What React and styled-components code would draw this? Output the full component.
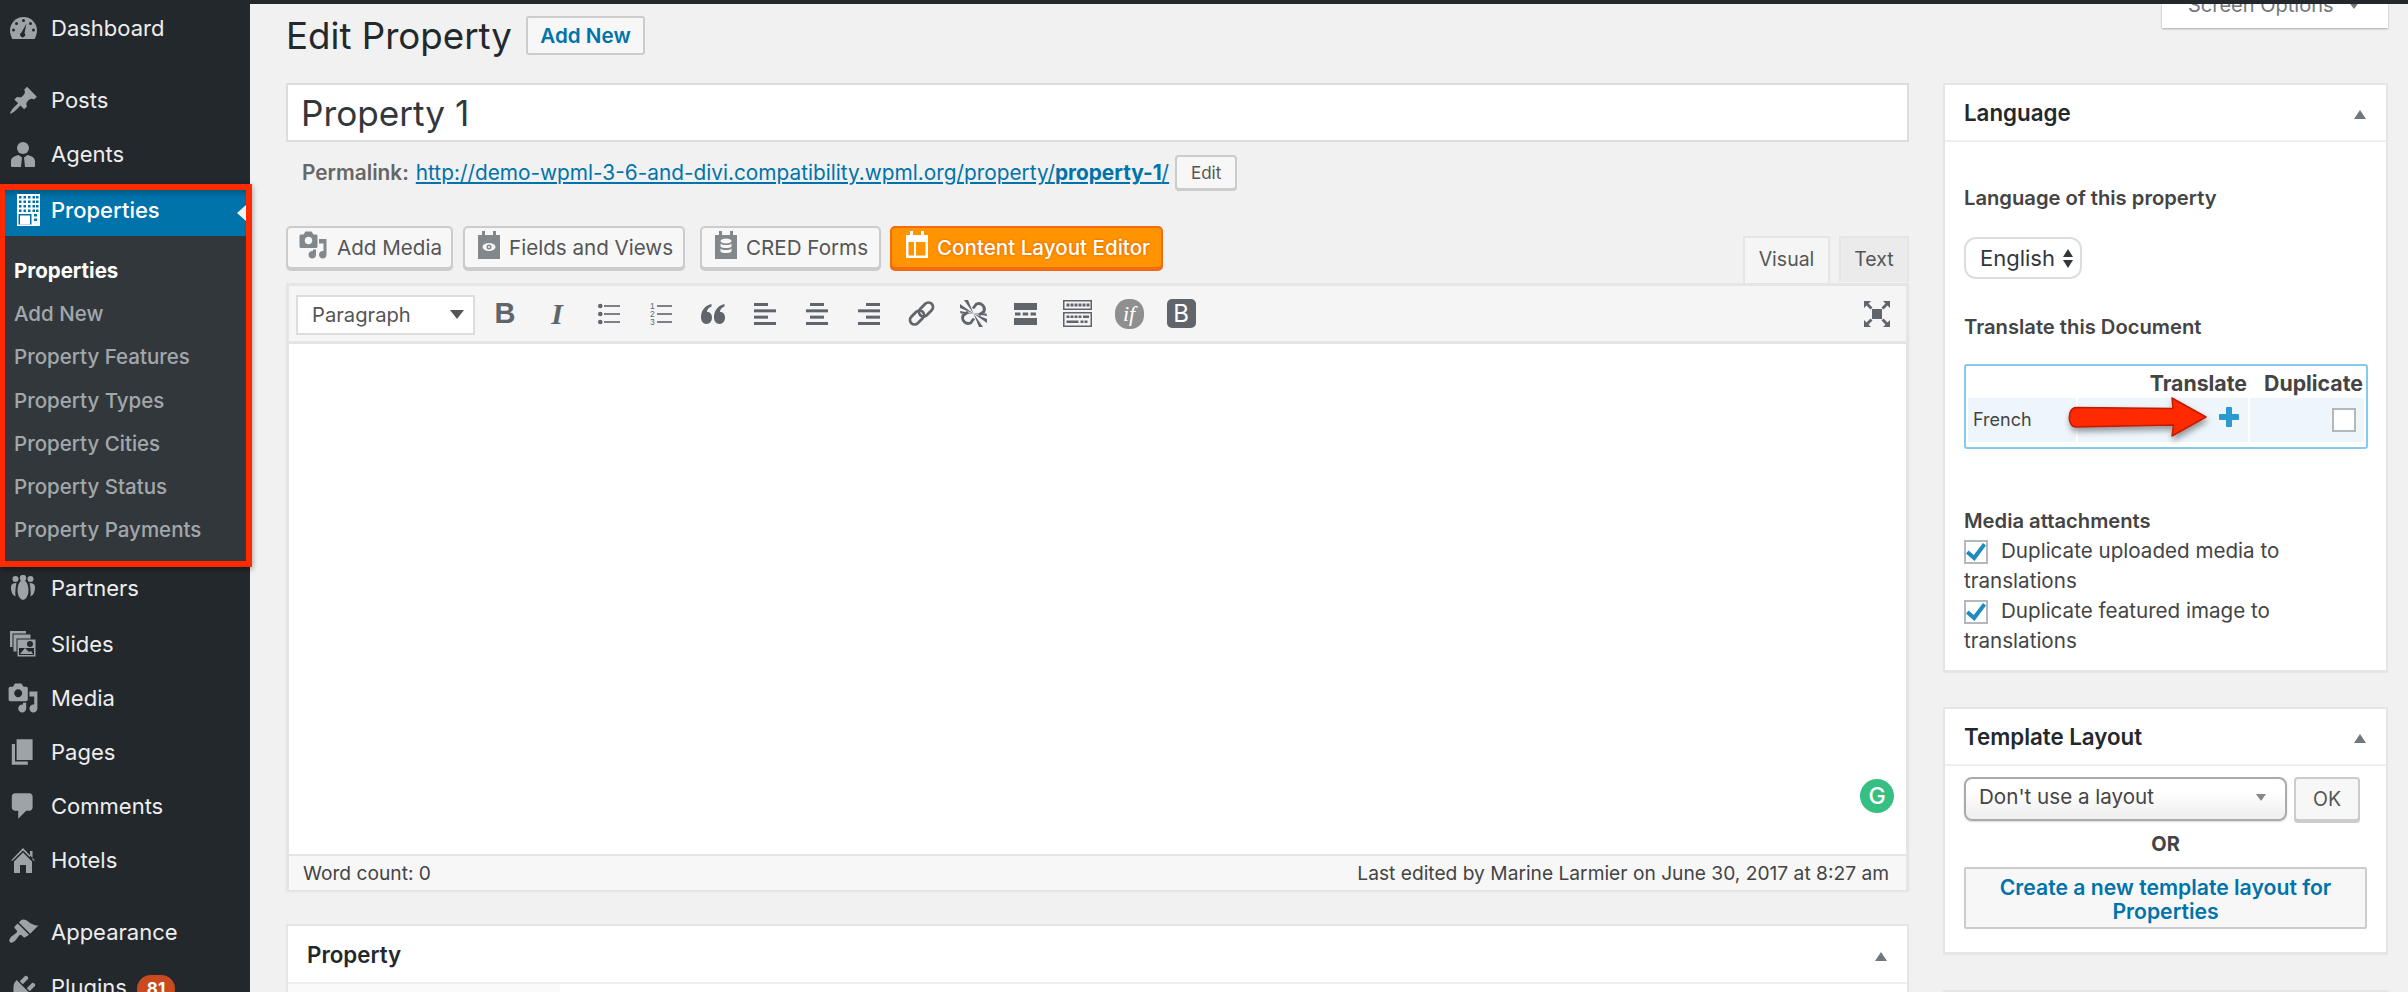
import React from "react";
import styled, { createGlobalStyle } from "styled-components";

const Global = createGlobalStyle`
  html, body { margin: 0; padding: 0; height: 992px; overflow: hidden; background: #f1f1f1; }
  body { font-family: Inter, "Noto Sans", "Liberation Sans", sans-serif; color: #444; }
  * { box-sizing: border-box; }
  #root { height: 992px; overflow: hidden; }
`;

const TopBar = styled.div`height: 4px; background: #23282d;`;
const Layout = styled.div`display: flex; height: 988px;`;

const Sidebar = styled.nav`
  width: 250px; flex: none; background: #23282d; position: relative;
`;
const MenuItem = styled.div`
  display: flex; align-items: center; height: ${p => p.$h || 54}px;
  margin-top: ${p => p.$mt || 0}px; color: #eee; font-size: 22px;
`;
const MenuIcon = styled.span`
  width: 51px; flex: none; display: flex; justify-content: center; padding-right: 5px; color: #9ea3a8;
  svg { display: block; fill: currentColor; }
`;
const Highlight = styled.div`
  position: relative; z-index: 2; width: 252px; margin-top: 3px;
  border: 6px solid #ff2a00; border-left-width: 5px;
  box-shadow: 0 2px 6px rgba(0,0,0,.4);
  background: #32373c;
`;
const ActiveItem = styled.div`
  display: flex; align-items: center; height: 46px; padding-bottom: 6px; padding-left: 0;
  background: #0073aa; color: #fff; font-size: 22px; font-weight: 500;
  box-shadow: inset 0 6px 5px -3px rgba(0,0,0,.25);
  ${MenuIcon} { width: 46px; color: #fff; padding-right: 0; }
`;
const ActiveCaret = styled.span`
  margin-left: auto; width: 0; height: 0; margin-top: 6px;
  border-top: 8px solid transparent; border-bottom: 8px solid transparent; border-right: 9px solid #f1f1f1;
`;
const SubMenu = styled.div`padding: 13px 0 10px 9px;`;
const SubItem = styled.div`
  height: 43.2px; line-height: 43.2px; font-size: 20.5px;
  color: ${p => p.$on ? "#fff" : "rgba(240,245,250,.6)"}; font-weight: ${p => p.$on ? 700 : 500};
`;
const Badge = styled.span`
  display: inline-block; margin-left: 10px; height: 28px; line-height: 28px; padding: 0 10px; border-radius: 14px;
  background: #ca4a1f; color: #fff; font-size: 17px; font-weight: 700;
`;
const MenuLabel = styled.span`white-space: nowrap;`;

const Content = styled.main`
  flex: 1; display: flex; gap: 34px; padding: 0 20px 0 36px; min-width: 0;
`;
const LeftCol = styled.div`width: 1623px; flex: none; padding-top: 12px;`;
const RightCol = styled.div`width: 445px; flex: none; display: flex; flex-direction: column;`;

const HeaderRow = styled.div`display: flex; align-items: center; gap: 16px; height: 39px;`;
const PageTitle = styled.h1`
  margin: 0; width: 224px; white-space: nowrap; font-size: 36.7px; font-weight: 400; color: #23282d; line-height: 39px;
`;
const AddNew = styled.span`
  display: flex; align-items: center; justify-content: center; width: 119px; height: 39px; border: 2px solid #ccc; border-radius: 3px;
  background: #f7f7f7; color: #0073aa; font-size: 20.6px; font-weight: 600;
`;
const TitleField = styled.div`
  margin-top: 28px; height: 59px; padding-left: 13px; display: flex; align-items: center;
  background: #fff; border: 2px solid #ddd; font-size: 35.2px; color: #32373c;
`;
const PermaRow = styled.div`
  margin-top: 13px; padding-left: 16px; height: 35px; display: flex; align-items: center; font-size: 20.8px; color: #666; white-space: nowrap;
`;
const PermaLabel = styled.strong`font-weight: 600; margin-right: 7px;`;
const PermaLink = styled.a`color: #0073aa; text-decoration: underline;`;
const SmallBtn = styled.span`
  margin-left: 6px; height: 35px; width: 62px; display: flex; align-items: center; justify-content: center;
  border: 2px solid #ccc; border-radius: 4px; background: #f7f7f7; color: #555; font-size: 17px; box-shadow: 0 1px 0 #ccc;
`;
const MediaRow = styled.div`margin-top: 36px; height: 57px; display: flex; align-items: flex-start;`;
const ToolBtn = styled.span`
  height: 43px; width: ${p => p.$w}px; margin-right: ${p => p.$mr}px; display: flex; align-items: center; gap: ${p => p.$gap || 9}px;
  padding-left: ${p => p.$pl || 12}px; border: 2px solid #ccc; border-radius: 5px; background: #f7f7f7; color: #555;
  font-size: 20.6px; box-shadow: 0 2px 0 #ccc; white-space: nowrap;
  svg { flex: none; fill: #82878c; margin-top: -6px; }
`;
const OrangeBtn = styled(ToolBtn)`
  background: #ff9400; border-color: #f56b0f; color: #fff; font-weight: 500; box-shadow: 0 2px 0 #ef6a10;
  text-shadow: 0 0 3px #d85a00; svg { fill: #fff; }
`;
const Tabs = styled.div`margin-left: auto; align-self: flex-end; display: flex; gap: 9px; margin-right: 0;`;
const Tab = styled.span`
  height: ${p => p.$on ? 47 : 46}px; width: ${p => p.$w}px; display: flex; align-items: center; justify-content: center; padding-bottom: 3px;
  border: 2px solid #e5e5e5; border-bottom: 0; background: ${p => p.$on ? "#f5f5f5" : "#ebebeb"}; color: #555; font-size: 19.5px;
`;
const Editor = styled.section`
  border: 3px solid #e5e5e5; border-bottom: 0; box-shadow: 0 2px 2px rgba(0,0,0,.06); background: #fff;
`;
const Toolbar = styled.div`
  height: 58px; background: #f5f5f5; border-bottom: 3px solid #e5e5e5; display: flex; align-items: center; padding: 0 0 0 7px;
`;
const FormatSelect = styled.span`
  width: 179px; height: 40px; margin-right: 4px; margin-top: 2px; flex: none; display: flex; align-items: center; justify-content: space-between;
  padding: 0 9px 0 14px; background: #fff; border: 2px solid #ddd; color: #555; font-size: 20.2px;
`;
const Caret = styled.i`
  width: 0; height: 0; border-left: ${p => p.$s || 7}px solid transparent; border-right: ${p => p.$s || 7}px solid transparent;
  border-top: ${p => (p.$s || 7) * 1.4}px solid ${p => p.$c || "#555"}; display: block;
`;
const TI = styled.span`
  width: 52px; height: 32px; flex: none; display: flex; align-items: center; justify-content: center; color: #60656c;
  ${p => p.$end && "margin-left: auto; margin-right: 3px;"}
  svg { display: block; }
`;
const BoldGlyph = styled.b`font: 700 29px "Liberation Sans", sans-serif; color: #60656c;`;
const ItalicGlyph = styled.i`font: italic 700 30px "Liberation Serif", serif; color: #60656c;`;
const IfBadge = styled.span`
  width: 29px; height: 30px; border-radius: 46%; background: #8f8f8f; color: #fff; display: flex; align-items: center; justify-content: center;
  font: italic 22px "Liberation Serif", serif;
`;
const BsBadge = styled.span`
  width: 29px; height: 29px; border-radius: 5px; background: #60656c; color: #fff; display: flex; align-items: center; justify-content: center;
  font: 400 24px Inter, sans-serif;
`;
const EditorBody = styled.div`
  height: 510px; background: #fff; display: flex; align-items: flex-end; justify-content: flex-end; padding: 0 12px 41px 0;
`;
const Grammarly = styled.span`
  width: 34px; height: 34px; border-radius: 50%; background: #35bf82; color: #fff; display: flex; align-items: center; justify-content: center;
  font: 500 23px Inter, sans-serif;
`;
const StatusBar = styled.div`
  height: 36px; border-top: 2px solid #e5e5e5; background: #f7f7f7; display: flex; align-items: center; justify-content: space-between;
  padding: 0 17px 0 14px; font-size: 19.2px; color: #444;
`;
const PostBox = styled.section`
  background: #fff; border: 2px solid #e5e5e5; box-shadow: 0 1px 1px rgba(0,0,0,.04); margin-top: ${p => p.$mt || 0}px; flex: none;
`;
const BoxHead = styled.div`
  height: ${p => p.$h || 57}px; display: flex; align-items: center; justify-content: space-between; padding: 0 20px 0 19px;
  border-bottom: 2px solid #eee; font-size: 22.3px; font-weight: 600; color: #23282d;
`;
const UpArrow = styled.i`
  width: 0; height: 0; border-left: 6px solid transparent; border-right: 6px solid transparent; border-bottom: 9px solid #72777c; display: block; margin-top: 4px;
`;
const PropertyRest = styled.div`height: 40px; display: flex;`;
const PropertySide = styled.div`width: 272px; background: #fafafa;`;

const ScreenTab = styled.div`
  align-self: flex-end; width: 226px; height: 24px; overflow: hidden; flex: none; background: #fff; display: flex; align-items: flex-end; justify-content: space-between;
  padding: 0 26px 11px 26px; box-shadow: 0 1px 2px rgba(0,0,0,.3); color: #72777c; font-size: 20px; line-height: 24px; white-space: nowrap;
`;
const ScreenTabText = styled.span`display: flex; align-items: center; gap: 14px;`;
const SideBody = styled.div`padding: ${p => p.$pad || "41px 19px 14px 19px"}; font-size: 20.6px; line-height: 30px; color: #444;`;
const Label = styled.div`font-weight: 600; font-size: 20.2px; margin-top: ${p => p.$mt || 0}px; color: #444;`;
const LangSelect = styled.span`
  margin-top: 24px; width: 118px; height: 42px; display: flex; align-items: center; gap: 8px; padding-left: 14px;
  border: 2px solid #ddd; border-radius: 12px; background: #fff; color: #32373c; font-size: 22px;
`;
const Updown = styled.span`display: flex; flex-direction: column; gap: 3px;`;
const Up = styled.i`width: 0; height: 0; border-left: 5px solid transparent; border-right: 5px solid transparent; border-bottom: 8px solid #32373c; display:block;`;
const Down = styled.i`width: 0; height: 0; border-left: 5px solid transparent; border-right: 5px solid transparent; border-top: 8px solid #32373c; display:block;`;
const TransTable = styled.div`
  position: relative; margin-top: 22px; width: 404px; height: 85px; border: 2px solid #85c9ec; border-radius: 3px; padding: 0 2px;
`;
const TransHead = styled.div`
  height: 32px; display: grid; grid-template-columns: 108px 170px 114px; column-gap: 2px; font-weight: 700; color: #444; line-height: 34px; font-size: 21.3px;
`;
const HeadCell = styled.span`text-align: right; white-space: nowrap; padding-right: 1px;`;
const TransRow = styled.div`height: 44px; display: grid; grid-template-columns: 108px 170px 114px; column-gap: 2px;`;
const TransCell = styled.div`
  background: #eef6fc; display: flex; align-items: center; font-size: 18px; color: #444; position: relative;
  padding-left: ${p => p.$pl || 0}px; justify-content: ${p => p.$j || "flex-start"}; padding-right: ${p => p.$pr || 0}px;
`;
const Arrow = styled.svg`position: absolute; left: 102px; top: 31px; overflow: visible;`;
const PlusCell = styled.span`margin-top: -7px; display: block; svg { display: block; }`;
const CheckBox = styled.span`
  width: 24px; height: 24px; flex: none; display: inline-flex; align-items: center; justify-content: center; background: #fff; border: 2px solid #b4b9be;
  svg { display: block; }
`;
const CheckLine = styled.div`white-space: normal;`;
const CheckText = styled.span`margin-left: 13px;`;
const InlineCheck = styled(CheckBox)`vertical-align: -3px;`;
const TemplateRow = styled.div`display: flex; gap: 7px; height: 44px;`;
const TemplateSelect = styled.span`
  width: 323px; height: 44px; display: flex; align-items: center; justify-content: space-between; padding: 0 19px 4px 13px; white-space: nowrap;
  border: 2px solid #aaa; border-radius: 8px; background: linear-gradient(#fff 30%, #eee); box-shadow: 0 1px 2px rgba(0,0,0,.15); color: #444; font-size: 20.6px;
`;
const OkBtn = styled.span`
  width: 66px; display: flex; align-items: center; justify-content: center; border: 2px solid #ccc; border-radius: 4px; background: #f7f7f7; color: #555; box-shadow: 0 2px 0 #ccc; font-size: 19.5px;
`;
const OrLine = styled.div`height: 46px; line-height: 46px; text-align: center; font-weight: 700; color: #444; font-size: 20px;`;
const CreateBtn = styled.div`
  height: 62px; padding: 6px 0; border: 2px solid #ccc; border-radius: 2px; background: #f7f7f7; color: #0073aa; text-align: center; font-weight: 600; line-height: 24px; font-size: 21.2px;
`;

const P = ({ d, s = 26, vb = "0 0 20 20" }) => <svg width={s} height={s} viewBox={vb}><path d={d} /></svg>;

const Dash = () => (
  <svg width="27" height="22" viewBox="0 0 27 22">
    <path d="M13.5 0C6 0 0 6 0 13.5c0 3 1 5.8 2.4 8.5h22.2c1.4-2.7 2.4-5.500 2.400-8.500C27 6 21 0 13.500 0z" />
    <g fill="#23282d">
      <circle cx="13.500" cy="3.500" r="1.500" /><circle cx="6.500" cy="6.500" r="1.500" /><circle cx="20.500" cy="6.500" r="1.500" />
      <circle cx="3.500" cy="13" r="1.500" /><circle cx="23.500" cy="13" r="1.500" />
      <path d="M16.500 6.500l-2 9.500a2.500 2.500 0 1 1-3-.5z" />
    </g>
  </svg>
);
const Agent = () => (
  <svg width="24" height="25" viewBox="0 0 24 25">
    <circle cx="12" cy="6" r="6" />
    <path d="M1 25c-1 0-1-1-1-1v-5c0-3 3-5 7.500-6L11 15.500l-1 9.500zM23 25c1 0 1-1 1-1v-5c0-3-3-5-7.500-6L13 15.500l1 9.500z" />
  </svg>
);
const Building = () => (
  <svg width="23" height="32" viewBox="0 0 23 32" style={{ fill: "#fff" }}>
    <rect width="23" height="32" />
    <g fill="#0073aa">
      {[2, 6.500, 11, 15.500].map(y => [3, 7.500, 12, 16.500, 20].map(x => <rect key={`${x}${y}`} x={x - 1} y={y} width="2.500" height="2.500" />))}
      <rect x="1.500" y="20" width="13" height="10.500" />
      <rect x="17" y="20" width="3" height="2.500" /><rect x="17" y="24.500" width="3" height="2.500" />
    </g>
    <rect x="3" y="21.500" width="10" height="9" />
  </svg>
);
const Partners = () => (
  <svg width="24" height="25" viewBox="0 0 24 25">
    <circle cx="4.500" cy="4" r="3" /><circle cx="12" cy="3" r="3.200" /><circle cx="19.500" cy="4" r="3" />
    <ellipse cx="12" cy="15" rx="5.500" ry="10" />
    <path d="M5.500 8C2 8 0 9.500 0 12c0 4 1 8 4.500 9.500C4 18 4.500 12 5.500 8zM18.500 8c3.500 0 5.500 1.500 5.500 4 0 4-1 8-4.500 9.500C20 18 19.500 12 18.500 8z" />
  </svg>
);
const Slides = () => (
  <svg width="26" height="26" viewBox="0 0 26 26">
    <rect x="0" y="0" width="16" height="16" />
    <rect x="3" y="3" width="18" height="18" stroke="#23282d" strokeWidth="1" />
    <rect x="7" y="8" width="19" height="18" stroke="#23282d" strokeWidth="1" />
    <rect x="9" y="17" width="15" height="7" fill="#23282d" />
    <circle cx="20" cy="13" r="3" fill="#23282d" />
    <path d="M10 23l5-6 4 4 2-1 2 3z" />
  </svg>
);
const House = () => (
  <svg width="24" height="25" viewBox="0 0 24 25">
    <path d="M12 0L0 12.500h1.800L12 2.500l7 6.700V3h2.500v8.700l.800.800H24z" />
    <path fillRule="evenodd" d="M12 4.500l-9 9V25h18V13.500zM9 17h6v8H9z" />
  </svg>
);
const Icon = {
  post: "M10.440 3.020l1.820-1.820 6.360 6.350-1.830 1.820c-1.050-.68-2.480-.57-3.410.36l-.75.75c-.92.93-1.040 2.350-.35 3.410l-1.830 1.820-2.410-2.410-2.800 2.790c-.42.42-3.380 2.710-3.800 2.290s1.860-3.390 2.280-3.810l2.790-2.790L4.100 9.360l1.830-1.820c1.050.69 2.480.57 3.400-.36l.75-.75c.93-.92 1.050-2.350.36-3.410z",
  media: "M13 11V4c0-.55-.45-1-1-1h-1.670L9 1H5L3.670 3H2c-.55 0-1 .45-1 1v7c0 .55.45 1 1 1h10c.55 0 1-.45 1-1zM7 4.500c1.380 0 2.500 1.120 2.500 2.500S8.380 9.500 7 9.500 4.500 8.380 4.500 7 5.620 4.500 7 4.500zM14 6h5v10.500c0 1.380-1.120 2.500-2.500 2.500S14 17.880 14 16.500s1.120-2.500 2.500-2.500c.17 0 .34.020.5.050V9h-3V6zm-4 8.050V13h2v3.500c0 1.380-1.120 2.500-2.500 2.500S7 17.880 7 16.500 8.120 14 9.500 14c.17 0 .34.020.5.050z",
  page: "M6 15V2h10v13H6zm-1 1h8v2H3V5h2v11z",
  comment: "M5 2h9c1.100 0 2 .9 2 2v7c0 1.100-.9 2-2 2h-2l-5 5v-5H5c-1.100 0-2-.9-2-2V4c0-1.100.9-2 2-2z",
  brush: "M14.480 11.060L7.410 3.990l1.500-1.500c.5-.56 2.300-.47 3.510.32 1.210.8 1.430 1.280 2.910 2.100 1.180.64 2.450 1.260 4.450.85zm-.71.71L6.700 4.700 4.930 6.470c-.39.39-.39 1.020 0 1.410l1.060 1.060c.39.39.39 1.030 0 1.420-.6.6-1.430 1.150-2.210 1.690-.35.26-.7.53-1.010.84-1.340 1.340-1.660 2.790-1.010 3.430.65.65 2.100.33 3.430-1.010.31-.31.58-.66.84-1.010.54-.78 1.090-1.610 1.690-2.210.39-.39 1.030-.39 1.420 0l1.060 1.060c.39.39 1.020.39 1.410 0z",
  plug: "M13.110 4.360L9.870 7.600 8 5.730l3.240-3.240c.35-.34 1.050-.2 1.560.32.52.51.66 1.210.31 1.550zm-8 1.770l.91-1.120 9.010 9.010-1.190.84c-.71.71-2.630 1.160-3.820 1.160H6.140L4.900 17.260c-.59.59-1.540.59-2.120 0-.59-.58-.59-1.530 0-2.120l1.240-1.240v-3.880c0-1.130.4-3.190 1.090-3.890zm7.260 3.970l3.240-3.240c.34-.35 1.040-.21 1.550.31.52.51.66 1.210.31 1.550l-3.240 3.250z",
};

const Menu = ({ icon, h, mt, children }) => (
  <MenuItem $h={h} $mt={mt}><MenuIcon>{icon}</MenuIcon><MenuLabel>{children}</MenuLabel></MenuItem>
);

const PlugBox = ({ eye }) => (
  <svg width="22" height="28" viewBox="0 0 22 28">
    <path fillRule="evenodd" d="M4 0h3v4h8V0h3v4h4v24H0V4h4z" />
    {eye ? (
      <g fill="#f7f7f7"><ellipse cx="11" cy="16" rx="6.500" ry="4" /><circle cx="11" cy="16" r="2.500" fill="#82878c" /><circle cx="11" cy="16" r="1" /></g>
    ) : (
      <g fill="#f7f7f7"><ellipse cx="11" cy="10" rx="5.500" ry="2.500" /><path d="M5.500 12.500c1.500 2 9.500 2 11 0v3c-1.500 2-9.500 2-11 0zM5.500 17.500c1.500 2 9.500 2 11 0v3c-1.500 2-9.500 2-11 0z" /></g>
    )}
  </svg>
);
const Calendar = () => (
  <svg width="22" height="27" viewBox="0 0 22 27">
    <path fillRule="evenodd" d="M4 0h3v4h8V0h3v4h4v23H0V4h4zM2.500 11v13.500H8V11zM10 11v13.500h9.500V11z" />
  </svg>
);
const Lines = ({ kind }) => {
  const off = kind === "left" ? 0 : kind === "center" ? 4 : 8;
  const rows = [[off, 14], [0, 22], [off, 14], [0, 22]];
  return (
    <svg width="22" height="22" viewBox="0 0 22 22" fill="currentColor">
      {rows.map(([x, w], i) => <rect key={i} x={x} y={i * 6.33} width={w} height="3" />)}
    </svg>
  );
};
const ListIcon = ({ ordered }) => (
  <svg width="22" height="22" viewBox="0 0 22 22" fill="currentColor">
    {[3, 11, 19].map((y, i) => (
      <g key={y}>
        <rect x={ordered ? 7 : 6} y={y - 0.8} width={ordered ? 15 : 16} height="1.600" />
        {ordered
          ? <text x="0" y={y + 3} fontSize="8.500" fontFamily="Liberation Sans, sans-serif">{i + 1}</text>
          : <circle cx="2.300" cy={y} r="2.300" />}
      </g>
    ))}
  </svg>
);
const Quote = () => (
  <svg width="24" height="20" viewBox="0 0 24 20" fill="currentColor">
    <path d="M10.500 0v2.500C7.500 3.500 6 5.500 6 8c3 0 5 2 5 5.500S9 20 5.500 20 0 17 0 13C0 6.500 4 1.500 10.500 0zM23.500 0v2.500c-3 1-4.500 3-4.500 5.500 3 0 5 2 5 5.500S22 20 18.500 20 13 17 13 13C13 6.500 17 1.500 23.500 0z" />
  </svg>
);
const LinkIcon = () => (
  <svg width="27" height="27" viewBox="0 0 27 27" fill="none" stroke="currentColor" strokeWidth="2.800">
    <rect x="10" y="5" width="16" height="9" rx="4.500" transform="rotate(-45 18 9.500)" />
    <rect x="1" y="13" width="16" height="9" rx="4.500" transform="rotate(-45 9 17.500)" />
  </svg>
);
const Unlink = () => (
  <svg width="27" height="27" viewBox="0 0 27 27" fill="none" stroke="currentColor" strokeWidth="2.800">
    <path d="M13 8.500l3.500-4.500a5.800 5.800 0 0 1 7.500 7.500L19 15" />
    <path d="M14 18.500l-3.500 4.500a5.800 5.800 0 0 1-7.500-7.500L8 12" />
    <path stroke="none" fill="currentColor" d="M13.500 13.500L4 0h4zM13.500 13.500L0 4v4zM13.500 13.500L0 11l.5 2.500zM13.500 13.500L23 27h-4zM13.500 13.500L27 23v-4zM13.500 13.500L27 16l-.5-2.500z" />
  </svg>
);
const Hr = () => (
  <svg width="23" height="22" viewBox="0 0 23 22" fill="currentColor">
    <rect width="23" height="7" /><rect y="15" width="23" height="7" />
    <rect x="1" y="9.500" width="5.500" height="3" /><rect x="8.700" y="9.500" width="5.500" height="3" /><rect x="16.500" y="9.500" width="5.500" height="3" />
  </svg>
);
const Sink = () => (
  <svg width="29" height="27" viewBox="0 0 29 27" fill="currentColor">
    <path fillRule="evenodd" d="M0 0h29v10H0zM1.500 1.500v7h26v-7z" />
    <path fillRule="evenodd" d="M0 12h29v15H0zM1.500 13.500v12h26v-12z" />
    {[5, 9, 13, 17, 21, 25].map(x => <rect key={x} x={x - 1.500} y="3.500" width="3" height="3" />)}
    {[5, 9, 13, 17].map(x => <rect key={x} x={x - 1.500} y="15.500" width="3" height="2.500" />)}
    <rect x="20" y="15.500" width="6" height="2.500" />
    <rect x="3.500" y="20.500" width="12" height="2.500" />
    {[19, 23].map(x => <rect key={x} x={x - 1.500} y="20.500" width="3" height="2.500" />)}
  </svg>
);
const Full = () => (
  <svg width="26" height="26" viewBox="0 0 26 26" fill="currentColor">
    <rect x="8" y="8" width="10" height="10" />
    <path d="M0 0h7L4.500 2.500l4 4-2 2-4-4L0 7zM26 0v7l-2.500-2.500-4 4-2-2 4-4L19 0zM0 26v-7l2.500 2.500 4-4 2 2-4 4L7 26zM26 26h-7l2.500-2.500-4-4 2-2 4 4L26 19z" />
  </svg>
);
const Tick = () => (
  <svg width="20" height="18" viewBox="0 0 20 18" fill="#1e8cbe"><path d="M17 0l3 2.500L8.500 18 0 10.500 2.500 7.500l5.300 4.500z" /></svg>
);
const Plus = () => (
  <svg width="20" height="20" viewBox="0 0 20 20" fill="#2a9bd0"><path d="M7 1a1 1 0 0 1 1-1h4a1 1 0 0 1 1 1v6h6a1 1 0 0 1 1 1v4a1 1 0 0 1-1 1h-6v6a1 1 0 0 1-1 1H8a1 1 0 0 1-1-1v-6H1a1 1 0 0 1-1-1V8a1 1 0 0 1 1-1h6z" /></svg>
);

export default function App() {
  return (
    <>
      <Global />
      <TopBar />
      <Layout>
        <Sidebar>
          <Menu h={48} icon={<Dash />}>Dashboard</Menu>
          <Menu mt={21} icon={<P d={Icon.post} s={31} />}>Posts</Menu>
          <Menu icon={<Agent />}>Agents</Menu>
          <Highlight>
            <ActiveItem>
              <MenuIcon><Building /></MenuIcon>
              <span>Properties</span>
              <ActiveCaret />
            </ActiveItem>
            <SubMenu>
              <SubItem $on>Properties</SubItem>
              <SubItem>Add New</SubItem>
              <SubItem>Property Features</SubItem>
              <SubItem>Property Types</SubItem>
              <SubItem>Property Cities</SubItem>
              <SubItem>Property Status</SubItem>
              <SubItem>Property Payments</SubItem>
            </SubMenu>
          </Highlight>
          <Menu h={41} icon={<Partners />}>Partners</Menu>
          <Menu mt={9} icon={<Slides />}>Slides</Menu>
          <Menu icon={<P d={Icon.media} s={32} />}>Media</Menu>
          <Menu icon={<P d={Icon.page} s={32} />}>Pages</Menu>
          <Menu icon={<P d={Icon.comment} s={32} />}>Comments</Menu>
          <Menu icon={<House />}>Hotels</Menu>
          <Menu mt={18} icon={<P d={Icon.brush} s={32} />}>Appearance</Menu>
          <Menu mt={2} icon={<P d={Icon.plug} s={32} />}>Plugins<Badge>81</Badge></Menu>
        </Sidebar>

        <Content>
          <LeftCol>
            <HeaderRow>
              <PageTitle>Edit Property</PageTitle>
              <AddNew>Add New</AddNew>
            </HeaderRow>
            <TitleField>Property 1</TitleField>
            <PermaRow>
              <PermaLabel>Permalink:</PermaLabel>
              <PermaLink>http://demo-wpml-3-6-and-divi.compatibility.wpml.org/property/<strong>property-1</strong>/</PermaLink>
              <SmallBtn>Edit</SmallBtn>
            </PermaRow>
            <MediaRow>
              <ToolBtn $w={167} $mr={10} $pl={10}><P d={Icon.media} s={30} />Add Media</ToolBtn>
              <ToolBtn $w={222} $mr={15} $pl={13}><PlugBox eye />Fields and Views</ToolBtn>
              <ToolBtn $w={181} $mr={9} $pl={13}><PlugBox />CRED Forms</ToolBtn>
              <OrangeBtn $w={273} $mr={0} $pl={14}><Calendar />Content Layout Editor</OrangeBtn>
              <Tabs>
                <Tab $on $w={87}>Visual</Tab>
                <Tab $w={70}>Text</Tab>
              </Tabs>
            </MediaRow>
            <Editor>
              <Toolbar>
                <FormatSelect>Paragraph<Caret /></FormatSelect>
                <TI><BoldGlyph>B</BoldGlyph></TI>
                <TI><ItalicGlyph>I</ItalicGlyph></TI>
                <TI><ListIcon /></TI>
                <TI><ListIcon ordered /></TI>
                <TI><Quote /></TI>
                <TI><Lines kind="left" /></TI>
                <TI><Lines kind="center" /></TI>
                <TI><Lines kind="right" /></TI>
                <TI><LinkIcon /></TI>
                <TI><Unlink /></TI>
                <TI><Hr /></TI>
                <TI><Sink /></TI>
                <TI><IfBadge>if</IfBadge></TI>
                <TI><BsBadge>B</BsBadge></TI>
                <TI $end><Full /></TI>
              </Toolbar>
              <EditorBody><Grammarly>G</Grammarly></EditorBody>
              <StatusBar>
                <span>Word count: 0</span>
                <span>Last edited by Marine Larmier on June 30, 2017 at 8:27 am</span>
              </StatusBar>
            </Editor>
            <PostBox $mt={34}>
              <BoxHead $h={58}>Property<UpArrow /></BoxHead>
              <PropertyRest><PropertySide /></PropertyRest>
            </PostBox>
          </LeftCol>

          <RightCol>
            <ScreenTab>
              <ScreenTabText>Screen Options<Caret $s={6} $c="#72777c" /></ScreenTabText>
            </ScreenTab>
            <PostBox $mt={55}>
              <BoxHead>Language<UpArrow /></BoxHead>
              <SideBody>
                <Label>Language of this property</Label>
                <LangSelect>English<Updown><Up /><Down /></Updown></LangSelect>
                <Label $mt={33}>Translate this Document</Label>
                <TransTable>
                  <TransHead>
                    <span />
                    <HeadCell>Translate</HeadCell>
                    <HeadCell>Duplicate</HeadCell>
                  </TransHead>
                  <TransRow>
                    <TransCell $pl={5}>French</TransCell>
                    <TransCell $j="flex-end" $pr={9}><PlusCell><Plus /></PlusCell></TransCell>
                    <TransCell $j="flex-end" $pr={8}><CheckBox /></TransCell>
                  </TransRow>
                  <Arrow width="140" height="40" viewBox="0 0 140 40">
                    <defs>
                      <filter id="sh" x="-10%" y="-30%" width="120%" height="170%">
                        <feDropShadow dx="1" dy="4" stdDeviation="3" floodColor="#000" floodOpacity=".4" />
                      </filter>
                    </defs>
                    <path filter="url(#sh)" fill="#ff2a00" stroke="#c21a00" strokeWidth="1.500" strokeLinejoin="round"
                      d="M8 10.500L105 11.500L104 1L138 20L104 39L105.500 28L8 30C-1 30-1 11 8 10.500z" />
                  </Arrow>
                </TransTable>
                <Label $mt={57}>Media attachments</Label>
                <CheckLine><InlineCheck><Tick /></InlineCheck><CheckText>Duplicate uploaded media to translations</CheckText></CheckLine>
                <CheckLine><InlineCheck><Tick /></InlineCheck><CheckText>Duplicate featured image to translations</CheckText></CheckLine>
              </SideBody>
            </PostBox>
            <PostBox $mt={35}>
              <BoxHead>Template Layout<UpArrow /></BoxHead>
              <SideBody $pad="11px 19px 23px 19px">
                <TemplateRow>
                  <TemplateSelect>Don't use a layout<Caret $s={5} $c="#888" /></TemplateSelect>
                  <OkBtn>OK</OkBtn>
                </TemplateRow>
                <OrLine>OR</OrLine>
                <CreateBtn>Create a new template layout for Properties</CreateBtn>
              </SideBody>
            </PostBox>
            <PostBox $mt={36}><BoxHead /></PostBox>
          </RightCol>
        </Content>
      </Layout>
    </>
  );
}
